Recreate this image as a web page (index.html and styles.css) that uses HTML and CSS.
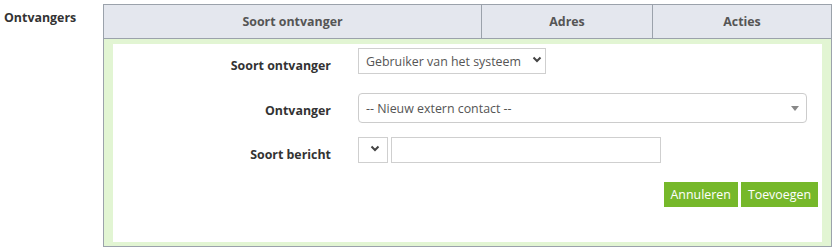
FILE: index.html
```html
<!DOCTYPE html>
<html lang="nl">
<head>
    <meta charset="UTF-8">
    <meta name="viewport" content="width=device-width, initial-scale=1.0">
    <title>Ontvangers</title>
    <link rel="stylesheet" href="styles.css">
</head>
<body>
    <div class="section">
        <div class="section-label">Ontvangers</div>
        <table class="recipients">
            <thead>
                <tr>
                    <th class="col-type">Soort ontvanger</th>
                    <th class="col-address">Adres</th>
                    <th class="col-actions">Acties</th>
                </tr>
            </thead>
            <tbody>
                <tr class="edit-row">
                    <td colspan="3">
                        <div class="edit-box">
                            <div class="form-row">
                                <label class="form-label">Soort ontvanger</label>
                                <div class="control">
                                    <div class="select-wrap type-select">
                                        <select>
                                            <option>Gebruiker van het systeem</option>
                                        </select>
                                        <svg class="chevron" width="10" height="7" viewBox="0 0 10 7"><path d="M1.5 1.5 L5 5 L8.5 1.5" fill="none" stroke="#444" stroke-width="2"/></svg>
                                    </div>
                                </div>
                            </div>
                            <div class="form-row tall">
                                <label class="form-label">Ontvanger</label>
                                <div class="control">
                                    <div class="select2">
                                        <span class="select2-text">-- Nieuw extern contact --</span>
                                        <svg class="select2-arrow" width="8" height="5" viewBox="0 0 8 5"><path d="M0 0 L8 0 L4 5 Z" fill="#888"/></svg>
                                    </div>
                                </div>
                            </div>
                            <div class="form-row">
                                <label class="form-label">Soort bericht</label>
                                <div class="control inline">
                                    <div class="select-wrap small-select">
                                        <select>
                                            <option></option>
                                        </select>
                                        <svg class="chevron" width="10" height="7" viewBox="0 0 10 7"><path d="M1.5 1.5 L5 5 L8.5 1.5" fill="none" stroke="#444" stroke-width="2"/></svg>
                                    </div>
                                    <input type="text" class="text-input">
                                </div>
                            </div>
                            <div class="buttons">
                                <button class="btn">Annuleren</button>
                                <button class="btn">Toevoegen</button>
                            </div>
                        </div>
                    </td>
                </tr>
            </tbody>
        </table>
    </div>
</body>
</html>
```

FILE: styles.css
```css
body {
    margin: 0;
    font-family: "Open Sans", Arial, sans-serif;
    font-size: 12.4px;
    color: #333;
}

.section {
    display: flex;
    padding: 4px 0 0 4px;
}

.section-label {
    width: 99px;
    font-weight: bold;
    line-height: 18px;
    padding-top: 5px;
}

.recipients {
    width: 729px;
    border-collapse: collapse;
    border: 1px solid #9ba2ab;
}

.recipients th {
    background-color: #e4e7ee;
    border: 1px solid #9ba2ab;
    color: #555;
    font-weight: bold;
    height: 33px;
    padding: 0;
    text-align: center;
}

.col-type {
    width: 377px;
}

.col-address {
    width: 170px;
}

.edit-row td {
    background-color: #e2f5d3;
    padding: 5px 9px 4px 9px;
}

.edit-box {
    background-color: #fff;
    padding: 4px 4px 35px 0;
}

.form-row {
    display: grid;
    grid-template-columns: 218px 1fr;
    column-gap: 27px;
    margin-right: 11px;
    margin-bottom: 18px;
}

.form-row.tall {
    margin-bottom: 14px;
}

.form-label {
    font-weight: bold;
    text-align: right;
    line-height: 18px;
    padding-top: 9px;
}

.control.inline {
    display: flex;
    gap: 3px;
}

.select-wrap {
    position: relative;
    height: 26px;
}

.select-wrap select {
    appearance: none;
    -webkit-appearance: none;
    box-sizing: border-box;
    width: 100%;
    height: 26px;
    border: 1px solid #cfcfcf;
    border-radius: 0;
    background: #fff;
    font-family: inherit;
    font-size: 12.4px;
    color: #555;
    padding: 0 14px 0 7px;
}

.type-select {
    width: 188px;
}

.small-select {
    width: 30px;
}

.chevron {
    position: absolute;
    right: 4px;
    top: 8px;
}

.small-select .chevron {
    right: 8px;
}

.select2 {
    box-sizing: border-box;
    height: 30px;
    border: 1px solid #cccccc;
    border-radius: 4px;
    display: flex;
    align-items: center;
    justify-content: space-between;
    padding: 0 7px 0 7px;
    color: #555;
}

.select2-arrow {
    margin-top: 1px;
}

.text-input {
    box-sizing: border-box;
    width: 270px;
    height: 26px;
    border: 1px solid #cfcfcf;
    font-family: inherit;
    font-size: 12.4px;
}

.buttons {
    display: flex;
    justify-content: flex-end;
    gap: 3px;
}

.btn {
    background-color: #76b82a;
    color: #fff;
    border: none;
    height: 25px;
    padding: 0 7px;
    font-family: inherit;
    font-size: 12.4px;
}
```
